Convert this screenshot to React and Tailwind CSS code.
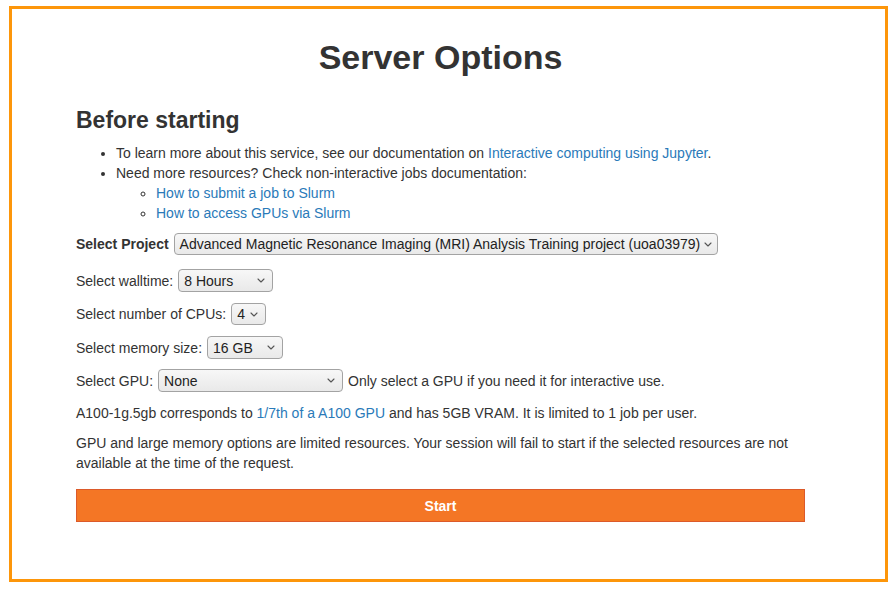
import React from 'react';

const font = { fontFamily: '"Liberation Sans", Arial, Helvetica, sans-serif' };

function Chevron() {
  return (
    <svg width="8" height="5" viewBox="0 0 8 5" className="ml-[4px] shrink-0">
      <path d="M1 1 L4 4 L7 1" fill="none" stroke="#555" strokeWidth="1.1" strokeLinecap="round" strokeLinejoin="round" />
    </svg>
  );
}

function FakeSelect({ value, className }) {
  return (
    <div
      className={`flex h-[22px] items-center justify-between rounded-[4px] border border-[#a3a3a3] bg-gradient-to-b from-[#f7f7f7] to-[#e9e9e9] pl-[5px] pr-[7px] text-[14px] text-[#222] ${className}`}
    >
      <span className="whitespace-nowrap leading-none">{value}</span>
      <Chevron />
    </div>
  );
}

const Link = ({ children }) => (
  <a href="#" className="text-[#2a7ab9]">{children}</a>
);

export default function App() {
  return (
    <div className="min-h-[590px] bg-white pl-[9px] pr-[8px] pt-[6px]" style={font}>
      <div className="h-[576px] border-[3px] border-[#fd960a] text-[14px] leading-[20px] text-[#333]">
        <div className="ml-[64px] w-[729px]">
          <h1 className="mt-[28px] text-center text-[34px] font-bold leading-[40px] text-[#333]">Server Options</h1>

          <h2 className="mt-[29px] text-[23px] font-bold leading-[28px]">Before starting</h2>

          <ul className="mt-[9px] list-disc pl-[40px]">
            <li>
              To learn more about this service, see our documentation on{' '}
              <Link>Interactive computing using Jupyter</Link>.
            </li>
            <li>
              Need more resources? Check non-interactive jobs documentation:
              <ul className="list-[circle] pl-[40px]">
                <li><Link>How to submit a job to Slurm</Link></li>
                <li><Link>How to access GPUs via Slurm</Link></li>
              </ul>
            </li>
          </ul>

          <div className="mt-[10px] flex items-center gap-[5px]">
            <span className="font-bold">Select Project</span>
            <FakeSelect value="Advanced Magnetic Resonance Imaging (MRI) Analysis Training project (uoa03979)" className="w-[544px]" />
          </div>

          <div className="mt-[14px] flex items-center gap-[5px]">
            <span>Select walltime:</span>
            <FakeSelect value="8 Hours" className="h-[23px] w-[95px]" />
          </div>

          <div className="mt-[11px] flex items-center gap-[5px]">
            <span>Select number of CPUs:</span>
            <FakeSelect value="4" className="w-[35px]" />
          </div>

          <div className="mt-[11px] flex items-center gap-[5px]">
            <span>Select memory size:</span>
            <FakeSelect value="16 GB" className="h-[23px] w-[76px]" />
          </div>

          <div className="mt-[10px] flex items-center gap-[5px]">
            <span>Select GPU:</span>
            <FakeSelect value="None" className="h-[23px] w-[185px]" />
            <span>Only select a GPU if you need it for interactive use.</span>
          </div>

          <p className="mt-[11px]">
            A100-1g.5gb corresponds to <Link>1/7th of a A100 GPU</Link> and has 5GB VRAM. It is limited to 1 job per user.
          </p>

          <p className="mt-[10px]">
            GPU and large memory options are limited resources. Your session will fail to start if the selected resources are not available at the time of the request.
          </p>

          <button className="mt-[16px] flex h-[33px] w-full items-center justify-center border border-[#dc5a2a] bg-[#f47625] text-[14px] font-bold text-white">
            Start
          </button>
        </div>
      </div>
    </div>
  );
}
